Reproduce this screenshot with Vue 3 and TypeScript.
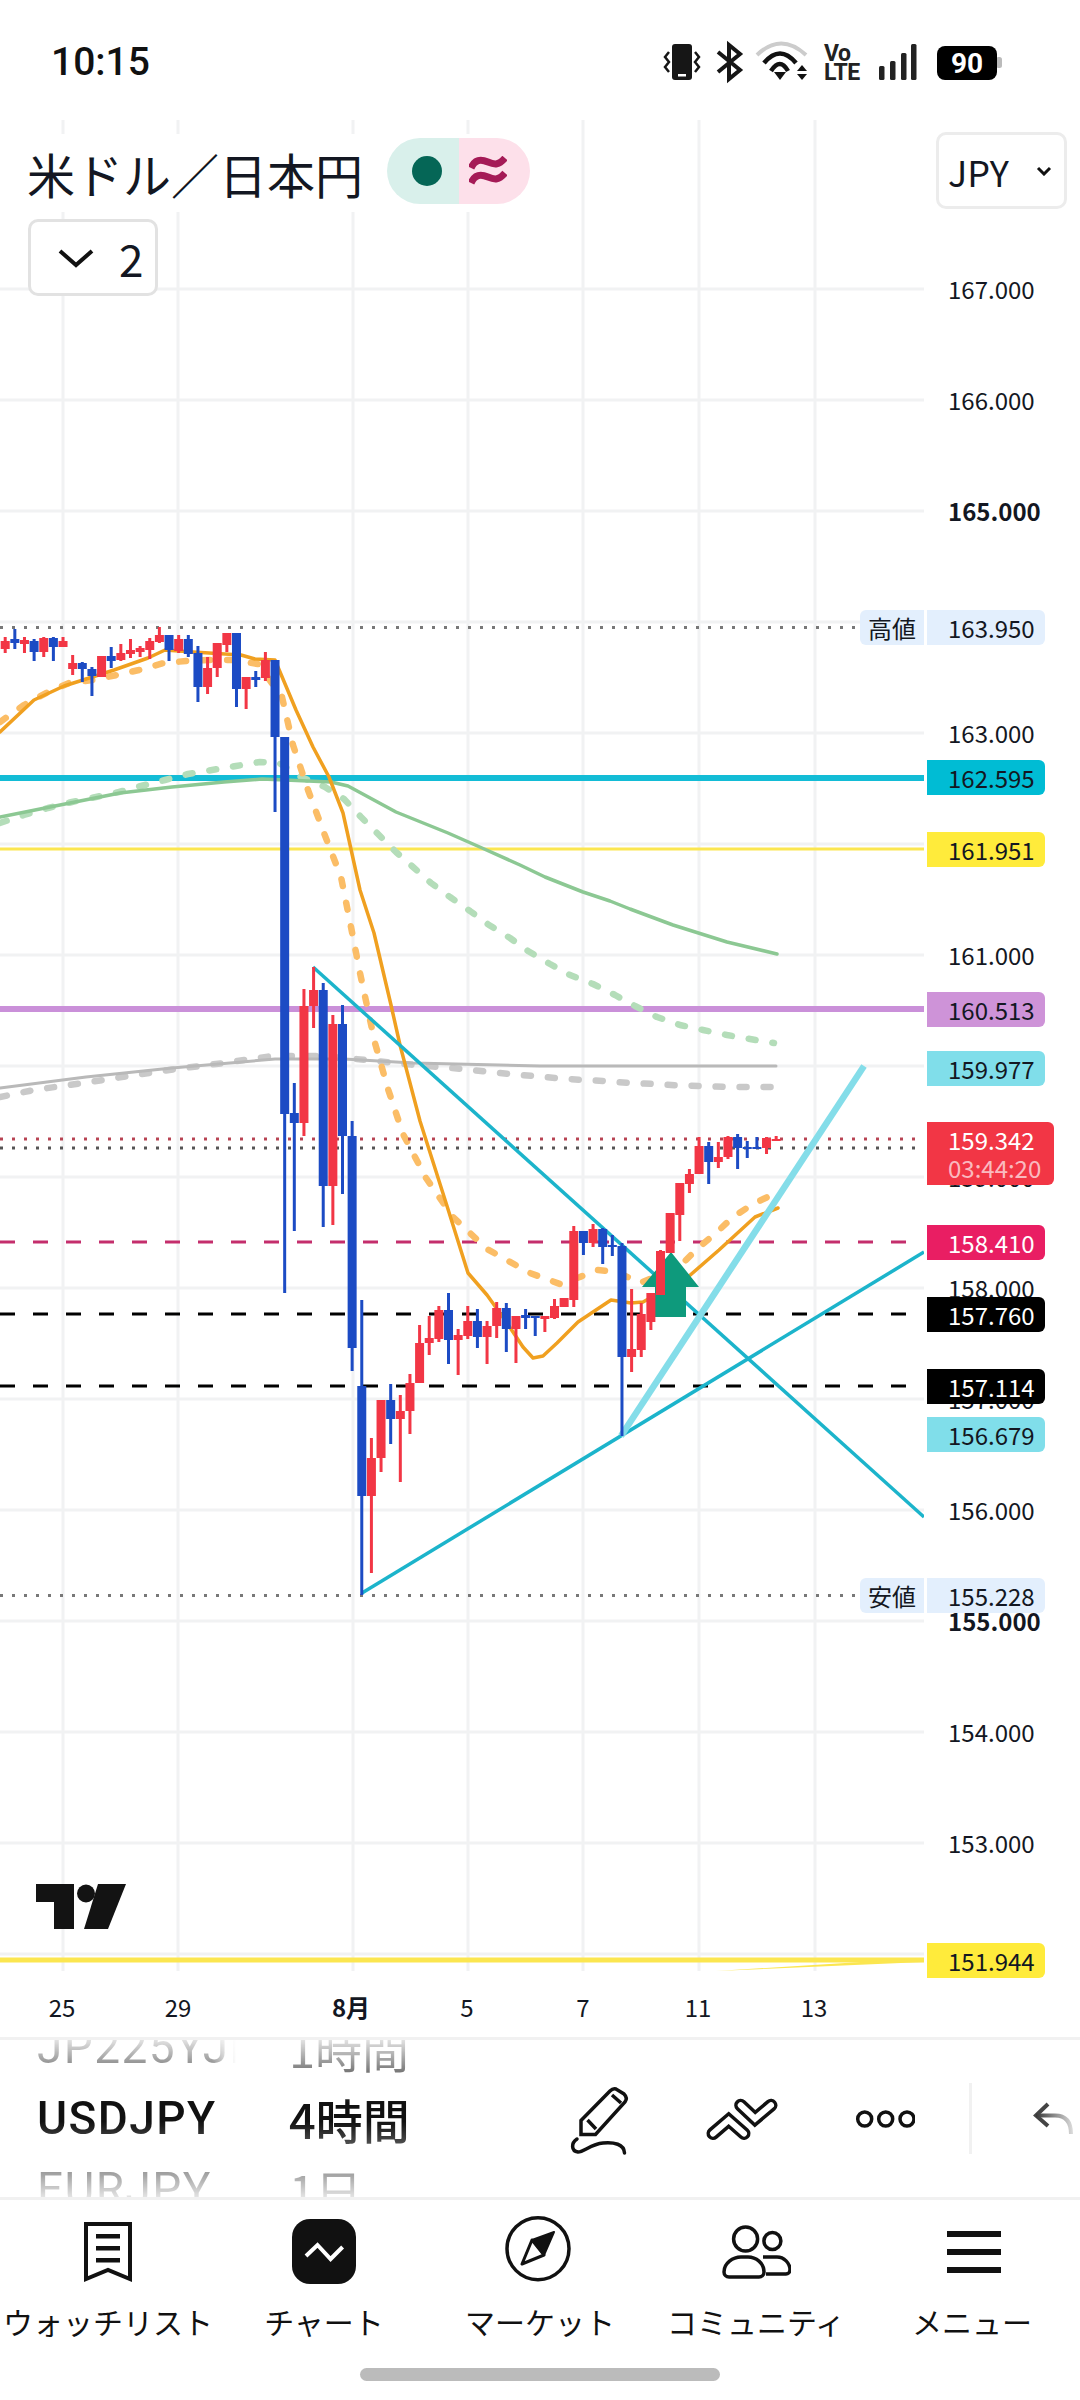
<template>
  <div class="screen">
    <header class="status">
      <span class="clock">10:15</span>
      <svg class="status-icons" width="345" height="44" viewBox="660 40 345 44">
        <rect x="672" y="44" width="20" height="36" rx="3" fill="#161616" />
        <rect x="678" y="74" width="8" height="2.5" fill="#fff" />
        <polyline points="669,52 665,57 669,62 665,67 669,72" fill="none" stroke="#161616" stroke-width="2.5" />
        <polyline points="695,52 699,57 695,62 699,67 695,72" fill="none" stroke="#161616" stroke-width="2.5" />
        <polyline points="718,52 740,70 729,79 729,45 740,54 718,72" fill="none" stroke="#161616" stroke-width="4" />
        <path d="M757 55Q781 32 806 55" fill="none" stroke="#ccc" stroke-width="4" />
        <path d="M764 63Q780 44 796 63" fill="none" stroke="#111" stroke-width="4.5" />
        <path d="M771 71Q780 57 788 71" fill="none" stroke="#111" stroke-width="4.5" />
        <polygon points="774,72 786,72 780,80" fill="#111" />
        <polygon points="797,71 807,71 802,65" fill="#111" />
        <polygon points="797,74 807,74 802,80" fill="#111" />
        <text class="volte" x="824" y="60.5">Vo</text>
        <text class="volte" x="824" y="79.5">LTE</text>
        <rect x="879" y="66" width="5.5" height="14" rx="1.5" fill="#222" />
        <rect x="890" y="61" width="5.5" height="19" rx="1.5" fill="#222" />
        <rect x="901" y="53" width="5.5" height="27" rx="1.5" fill="#222" />
        <rect x="911" y="44" width="5.5" height="36" rx="1.5" fill="#222" />
        <rect x="996" y="57" width="6" height="11" rx="2.5" fill="#bbb" />
        <rect x="937" y="46" width="60" height="34" rx="8" fill="#000" />
        <text class="battery" x="967" y="73" text-anchor="middle">90</text>
      </svg>
    </header>

    <section class="chart">
      <div class="plot-row">
        <svg class="plot" width="924" height="1851" viewBox="0 120 924 1851">
          <line v-for="y in gridY" :key="'h' + y" x1="0" x2="924" :y1="y" :y2="y" class="grid" />
          <line v-for="x in gridX" :key="'v' + x" :x1="x" :x2="x" y1="120" y2="1971" class="grid" />

          <line x1="0" x2="860" y1="627.5" y2="627.5" stroke="#787878" stroke-width="3" stroke-dasharray="3 9" />
          <line x1="0" x2="860" y1="1595.5" y2="1595.5" stroke="#787878" stroke-width="3" stroke-dasharray="3 9" />
          <line x1="0" x2="924" y1="778" y2="778" stroke="#13bcd6" stroke-width="6" />
          <line x1="0" x2="924" y1="849" y2="849" stroke="#fbe650" stroke-width="3" />
          <line x1="0" x2="924" y1="1009" y2="1009" stroke="#ca90d9" stroke-width="6" />
          <line x1="0" x2="910" y1="1242" y2="1242" stroke="#c42e6c" stroke-width="3" stroke-dasharray="15 18" />
          <line x1="0" x2="910" y1="1314" y2="1314" stroke="#000" stroke-width="3" stroke-dasharray="15 18" />
          <line x1="0" x2="910" y1="1386" y2="1386" stroke="#000" stroke-width="3" stroke-dasharray="15 18" />
          <line x1="0" x2="924" y1="1960" y2="1960" stroke="#fbe650" stroke-width="5" />
          <polygon points="716,1971 924,1958 924,1962" fill="#fbe650" />

          <polyline v-for="m in averages" :key="m.id" :points="m.points" fill="none" :stroke="m.color" :stroke-width="m.width"
            :stroke-dasharray="m.dash" stroke-linecap="round" stroke-linejoin="round" />

          <line x1="0" x2="924" y1="1139" y2="1139" stroke="#b84453" stroke-width="3" stroke-dasharray="3 9" />
          <line x1="0" x2="924" y1="1148" y2="1148" stroke="#555" stroke-width="3" stroke-dasharray="3 9" />

          <line x1="313" y1="967" x2="924" y2="1517" stroke="#1cb4cb" stroke-width="3.5" />
          <line x1="362" y1="1593" x2="924" y2="1252" stroke="#1cb4cb" stroke-width="3.5" />
          <line x1="621" y1="1436" x2="864" y2="1066" stroke="#84dde9" stroke-width="6.5" />
          <polygon points="671,1252 699,1287 686,1287 686,1317 655,1317 655,1287 642,1287" fill="#0e9a7c" />

          <g v-for="c in bars" :key="c.i" :fill="c.color">
            <rect :x="c.x - 1.5" :y="c.wt" width="3" :height="c.wb - c.wt" />
            <rect :x="c.x - 4.5" :y="c.bt" width="9" :height="Math.max(c.bb - c.bt, 2)" />
          </g>

          <path d="M36 1884H74V1929H54V1902H36Z" fill="#131313" />
          <circle cx="86" cy="1893.5" r="9" fill="#131313" />
          <path d="M98 1884H126L108 1929H84Z" fill="#131313" />
        </svg>

        <div class="axis">
          <span v-for="t in ticks" :key="t.label" class="tick" :class="{ strong: t.strong }" :style="{ top: t.top + 'px' }">{{ t.label }}</span>
          <template v-for="f in flags" :key="f.label">
            <span v-if="f.side" class="side" :style="{ top: f.top + 'px' }">{{ f.side }}</span>
            <span class="tag" :class="f.tone" :style="{ top: f.top + 'px' }">{{ f.label }}</span>
          </template>
          <div class="tag-now">
            <span>159.342</span>
            <span class="countdown">03:44:20</span>
          </div>
        </div>
      </div>

      <div class="dates">
        <span v-for="d in dates" :key="d.label" class="date" :class="{ strong: d.strong }" :style="{ left: d.x + 'px' }">{{ d.label }}</span>
      </div>

      <div class="legend">
        <span class="pair">米ドル／日本円</span>
        <span class="pill">
          <span class="pill-left"><i class="dot"></i></span>
          <span class="pill-right">
            <svg width="38" height="30" viewBox="0 0 38 30">
              <path d="M2 12C6 3 12 3 19 6S30 9 36 2" fill="none" stroke="#a51a56" stroke-width="7" />
              <path d="M2 27C6 18 12 18 19 21S30 24 36 17" fill="none" stroke="#a51a56" stroke-width="7" />
            </svg>
          </span>
        </span>
      </div>
      <div class="collapse">
        <svg width="36" height="20" viewBox="0 0 36 20"><polyline points="2,3 18,17 34,3" fill="none" stroke="#111" stroke-width="4" /></svg>
        <span>2</span>
      </div>
      <div class="currency">
        <span>JPY</span>
        <svg width="16" height="10" viewBox="0 0 16 10"><polyline points="2,2 8,8 14,2" fill="none" stroke="#111" stroke-width="3" /></svg>
      </div>
    </section>

    <section class="toolbar">
      <div class="wheel wheel-symbol">
        <div class="row cut">JP225YJPY</div>
        <div class="row active">USDJPY</div>
        <div class="row">EURJPY</div>
      </div>
      <div class="wheel wheel-range">
        <div class="row">1時間</div>
        <div class="row active">4時間</div>
        <div class="row">1日</div>
      </div>
      <div class="tool">
        <svg width="80" height="80" viewBox="558 2077 80 80" fill="none" stroke="#111" stroke-width="3.5">
          <path d="M580 2132.5V2118.5L609 2089Q612 2086 615 2087L623 2092Q627 2096 624 2100L594.5 2132.5Z" />
          <path d="M586.5 2118L595 2127M611 2093L620 2101" />
          <path d="M576 2137C570 2141 570 2149 577 2150C583 2150 590 2142 602 2141C613 2140 623 2142 623.5 2151" stroke-linecap="round" />
        </svg>
      </div>
      <div class="tool">
        <svg width="80" height="60" viewBox="701 2087 80 60" fill="none" stroke-linecap="round">
          <polyline points="712,2131.5 727.7,2118 743,2131.5" stroke="#111" stroke-width="13" />
          <polyline points="712,2131.5 727.7,2118 743,2131.5" stroke="#fff" stroke-width="6" />
          <polyline points="739.7,2103.3 754,2116.7 770,2103.3" stroke="#111" stroke-width="13" />
          <polyline points="739.7,2103.3 754,2116.7 770,2103.3" stroke="#fff" stroke-width="6" />
        </svg>
      </div>
      <div class="tool">
        <svg width="60" height="24" viewBox="854 2106 60 24" fill="none" stroke="#111" stroke-width="3.5">
          <circle cx="863.7" cy="2118" r="7" />
          <circle cx="884.7" cy="2118" r="7" />
          <circle cx="906" cy="2118" r="7" />
        </svg>
      </div>
      <div class="divider"></div>
      <svg class="undo" width="46" height="40" viewBox="1034 2098 46 40" fill="none" stroke-width="4">
        <defs>
          <linearGradient id="undoFade" gradientUnits="userSpaceOnUse" x1="1036" y1="0" x2="1074" y2="0">
            <stop offset="0" stop-color="#333" />
            <stop offset="1" stop-color="#ddd" />
          </linearGradient>
        </defs>
        <polyline points="1049,2103 1037,2114.5 1049,2125" stroke="#444" />
        <path d="M1037 2114.5H1056Q1072 2114.5 1072 2133" stroke="url(#undoFade)" />
      </svg>
    </section>

    <nav class="nav">
      <div class="nav-items">
        <div class="nav-item">
          <svg width="70" height="70" viewBox="73 2212 70 70">
            <path d="M86 2222H130V2277L108 2268L86 2277Z" fill="none" stroke="#111" stroke-width="4" />
            <rect x="96" y="2232" width="24" height="4.5" fill="#111" />
            <rect x="96" y="2244" width="24" height="4.5" fill="#111" />
            <rect x="96" y="2256" width="24" height="4.5" fill="#111" />
          </svg>
          <span>ウォッチリスト</span>
        </div>
        <div class="nav-item">
          <svg width="70" height="70" viewBox="289 2212 70 70">
            <rect x="292" y="2217" width="64" height="65" rx="18" fill="#111" />
            <polyline points="306,2254 317.5,2243 330.6,2257 342.6,2245" fill="none" stroke="#fff" stroke-width="4" />
          </svg>
          <span>チャート</span>
        </div>
        <div class="nav-item">
          <svg width="70" height="70" viewBox="505 2212 70 70">
            <circle cx="538" cy="2246.7" r="31" fill="none" stroke="#111" stroke-width="3.5" />
            <polygon points="554,2230 532,2238 544,2253" fill="#111" stroke="#111" stroke-width="2" stroke-linejoin="round" />
            <polygon points="532,2238 522,2262 544,2253" fill="none" stroke="#111" stroke-width="3" stroke-linejoin="round" />
          </svg>
          <span>マーケット</span>
        </div>
        <div class="nav-item">
          <svg width="70" height="70" viewBox="721 2212 70 70" fill="none" stroke="#111" stroke-width="3.5">
            <circle cx="745.6" cy="2237" r="12" />
            <circle cx="772.4" cy="2239" r="8.5" />
            <path d="M729 2275H759A5 5 0 0 0 764 2270C764 2261 756 2255 748 2255H741C733 2255 724 2261 724 2270A5 5 0 0 0 729 2275Z" />
            <path d="M763 2255H777C784 2255 790 2261 790 2268A4 4 0 0 1 786 2272H766" />
          </svg>
          <span>コミュニティ</span>
        </div>
        <div class="nav-item">
          <svg width="70" height="70" viewBox="937 2212 70 70">
            <rect x="947" y="2229" width="54" height="6" fill="#111" />
            <rect x="947" y="2247" width="54" height="6" fill="#111" />
            <rect x="947" y="2265" width="54" height="6" fill="#111" />
          </svg>
          <span>メニュー</span>
        </div>
      </div>
      <div class="home-bar"></div>
    </nav>
  </div>
</template>

<script setup lang="ts">
type Tone = 'pale' | 'teal' | 'yellow' | 'violet' | 'sky' | 'rose' | 'ink'

const priceY = (p: number) => 289 + (167 - p) * 111
const axisTop = (p: number, h: number) => priceY(p) - 120 - h / 2

const gridX = [63, 178, 353, 468, 583, 699, 815]
const gridY = [167, 166, 165, 164, 163, 162, 161, 160, 159, 158, 157, 156, 155, 154, 153, 152].map(priceY)

const tickRows: [string, boolean?][] = [
  ['167.000'], ['166.000'], ['165.000', true], ['163.000'], ['161.000'], ['159.000'], ['158.000'],
  ['157.000'], ['156.000'], ['155.000', true], ['154.000'], ['153.000'],
]
const ticks = tickRows.map(([label, strong]) => ({ label, strong: !!strong, top: axisTop(parseFloat(label), 30) }))

const flagRows: [string, Tone, string?][] = [
  ['163.950', 'pale', '高値'],
  ['162.595', 'teal'],
  ['161.951', 'yellow'],
  ['160.513', 'violet'],
  ['159.977', 'sky'],
  ['158.410', 'rose'],
  ['157.760', 'ink'],
  ['157.114', 'ink'],
  ['156.679', 'sky'],
  ['155.228', 'pale', '安値'],
  ['151.944', 'yellow'],
]
const flags = flagRows.map(([label, tone, side]) => ({ label, tone, side, top: axisTop(parseFloat(label), 35) }))

const dates = [
  { label: '25', x: 62 },
  { label: '29', x: 178 },
  { label: '8月', x: 351, strong: true },
  { label: '5', x: 467 },
  { label: '7', x: 583 },
  { label: '11', x: 698 },
  { label: '13', x: 814 },
]

// wick top, wick bottom, body top, body bottom, 1 = up (red)
const candles: number[][] = [
  [637, 653, 641, 649, 1], [629, 649, 639, 643, 0], [637, 653, 640, 644, 1], [639, 661, 641, 652, 0],
  [637, 657, 638, 652, 1], [637, 661, 638, 647, 0], [637, 647, 641, 647, 1], [655, 675, 663, 669, 1],
  [662, 682, 663, 669, 0], [667, 696, 669, 676, 0], [656, 677, 656, 677, 1], [647, 668, 656, 661, 0],
  [644, 661, 653, 660, 1], [639, 658, 650, 654, 1], [646, 657, 648, 652, 1], [638, 659, 641, 650, 1],
  [627, 643, 635, 642, 1], [635, 661, 635, 650, 0], [635, 653, 639, 651, 1], [635, 657, 639, 654, 0],
  [646, 702, 653, 687, 0], [657, 694, 668, 687, 1], [643, 677, 643, 668, 1], [633, 652, 633, 645, 1],
  [633, 707, 633, 689, 0], [677, 709, 677, 689, 1], [671, 687, 677, 680, 0], [652, 681, 660, 678, 1],
  [660, 812, 660, 737, 0], [737, 1293, 737, 1114, 0], [1083, 1231, 1113, 1123, 0], [989, 1136, 1006, 1123, 1],
  [967, 1028, 990, 1006, 1], [983, 1227, 990, 1186, 0], [1015, 1225, 1024, 1186, 1], [1005, 1194, 1024, 1136, 0],
  [1121, 1371, 1136, 1348, 0], [1300, 1595, 1386, 1496, 0], [1438, 1573, 1458, 1496, 1], [1400, 1472, 1400, 1458, 1],
  [1384, 1444, 1400, 1419, 0], [1395, 1482, 1411, 1419, 1], [1374, 1434, 1383, 1411, 1], [1325, 1383, 1343, 1383, 1],
  [1316, 1355, 1338, 1343, 1], [1306, 1342, 1310, 1339, 1], [1293, 1364, 1310, 1340, 0], [1329, 1375, 1335, 1340, 1],
  [1306, 1339, 1321, 1336, 1], [1309, 1348, 1321, 1337, 0], [1321, 1364, 1326, 1337, 1], [1302, 1338, 1308, 1326, 1],
  [1303, 1352, 1308, 1329, 0], [1316, 1363, 1316, 1329, 1], [1309, 1329, 1315, 1318, 0], [1316, 1336, 1316, 1318, 0],
  [1316, 1332, 1316, 1319, 1], [1299, 1319, 1306, 1318, 1], [1298, 1307, 1298, 1307, 1], [1226, 1307, 1231, 1300, 1],
  [1231, 1255, 1231, 1243, 0], [1224, 1247, 1229, 1243, 1], [1228, 1264, 1229, 1247, 0], [1235, 1256, 1245, 1247, 0],
  [1243, 1436, 1246, 1357, 0], [1289, 1372, 1349, 1357, 1], [1303, 1357, 1314, 1350, 1], [1293, 1330, 1293, 1322, 1],
  [1250, 1295, 1251, 1295, 1], [1213, 1253, 1213, 1253, 1], [1183, 1241, 1183, 1215, 1], [1169, 1193, 1174, 1184, 1],
  [1137, 1174, 1146, 1174, 1], [1142, 1184, 1146, 1162, 0], [1142, 1168, 1157, 1162, 1], [1136, 1159, 1137, 1157, 1],
  [1134, 1169, 1137, 1148, 0], [1141, 1158, 1147, 1149, 0], [1137, 1149, 1147, 1149, 0], [1137, 1154, 1138, 1148, 1],
  [1136, 1141, 1139, 1140, 1],
]
const bars = candles.map(([wt, wb, bt, bb, up], i) => ({
  i, wt, wb, bt, bb,
  x: 5.2 + i * 9.637,
  color: up ? '#f23645' : '#1c4bc4',
}))

const averages = [
  {
    id: 'gray-dash', color: '#c9c9c9', width: 6.5, dash: '7 17',
    points: '0,1097 34,1090 83,1083 129,1076 176,1069 224,1063 272,1056 320,1056 367,1060 415,1065 463,1069 510,1074 556,1078 583,1080 605,1081 630,1083 654,1084 678,1085.5 702,1086 726,1087 774,1087',
  },
  {
    id: 'gray', color: '#b9b9b9', width: 3, dash: undefined,
    points: '0,1088 86,1077 172,1068 275,1059 344,1059 413,1063 540,1066 776,1066',
  },
  {
    id: 'green-dash', color: '#b4ddb9', width: 6.5, dash: '7 17',
    points: '0,823 24,815 48,808 72,802 96,797 119,792 141,786 165,780 188,774 212,770 236,766 260,762 279,763 301,777 325,787 344,799 361,817 378,834 396,852 413,867 431,883 450,897 470,911 489,925 510,938 528,951 550,964 570,975 593,984 615,995 635,1006 657,1017 680,1025 703,1030 727,1035 750,1039 774,1043',
  },
  {
    id: 'green', color: '#8cc893', width: 3.5, dash: undefined,
    points: '0,817 45,808 120,793 172,787 224,782 262,779 331,782 348,786 396,812 448,833 482,848 520,865 545,877 583,892 610,901 630,909 673,925 727,942 777,954',
  },
  {
    id: 'orange-dash', color: '#fbbd66', width: 6.5, dash: '7 17',
    points: '0,722 24,705 48,692 69,683 93,680 117,675 139,670 164,663 186,661 210,660 234,660 258,664 282,697 293,745 308,790 324,833 341,877 351,927 360,973 375,1043 388,1089 403,1134 426,1178 453,1217 487,1249 530,1273 560,1284 580,1277 597,1270 617,1272 640,1283 660,1275 683,1263 698,1248 716,1233 733,1217 753,1204 778,1192',
  },
  {
    id: 'orange', color: '#f0a020', width: 3.5, dash: undefined,
    points: '0,732 34,700 64,686 83,680 114,670 148,658 165,650 193,652 241,655 255,659 275,660 296,710 313,747 329,777 343,813 360,890 374,933 391,1005 400,1045 420,1121 447,1206 468,1273 487,1295 507,1323 523,1347 533,1358 543,1356 557,1343 578,1322 593,1312 611,1300 631,1303 643,1302 688,1277 719,1250 755,1217 778,1208',
  },
]
</script>

<style scoped>
.screen {
  width: 1080px;
  height: 2400px;
  background: #fff;
  color: #131722;
  font-family: "Noto Sans CJK JP", "Noto Sans", sans-serif;
  overflow: hidden;
}

/* status bar */
.status {
  display: flex;
  height: 120px;
  box-sizing: border-box;
  padding: 40px 75px 0 51px;
  justify-content: space-between;
}
.clock {
  font-family: Roboto, sans-serif;
  font-weight: 500;
  font-size: 39px;
  line-height: 44px;
  color: #111;
}
.volte {
  font-family: Roboto, sans-serif;
  font-weight: 700;
  font-size: 23px;
  letter-spacing: -0.5px;
  fill: #222;
}
.battery {
  font-family: Roboto, sans-serif;
  font-weight: 700;
  font-size: 28px;
  fill: #fff;
}

/* chart */
.chart {
  position: relative;
  height: 1917px;
}
.plot-row {
  display: flex;
  height: 1851px;
}
.plot {
  display: block;
  flex: none;
}
.grid {
  stroke: #f1f2f3;
  stroke-width: 3;
}
.axis {
  position: relative;
  flex: 1;
  font-size: 24px;
}
.tick {
  position: absolute;
  left: 24px;
  line-height: 30px;
}
.tick.strong {
  font-weight: 700;
}
.tag, .side {
  position: absolute;
  height: 35px;
  line-height: 35px;
}
.tag {
  left: 3px;
  width: 118px;
  box-sizing: border-box;
  padding-left: 21px;
  border-radius: 0 6px 6px 0;
}
.side {
  left: -64px;
  width: 64px;
  text-align: center;
  background: #e3effd;
  border-radius: 6px 0 0 6px;
}
.pale { background: #e3effd; }
.teal { background: #00bcd4; }
.yellow { background: #ffeb3b; }
.violet { background: #ce93d8; }
.sky { background: #80deea; }
.rose { background: #e91e63; color: #fff; }
.ink { background: #000; color: #fff; }
.tag-now {
  position: absolute;
  left: 3px;
  top: 1002px;
  width: 127px;
  height: 63px;
  box-sizing: border-box;
  padding: 4px 0 0 21px;
  display: flex;
  flex-direction: column;
  background: #f23645;
  color: #fff;
  border-radius: 0 6px 6px 0;
  line-height: 28px;
}
.countdown {
  color: rgba(255, 255, 255, 0.68);
}
.dates {
  position: relative;
  height: 66px;
  font-size: 24px;
}
.date {
  position: absolute;
  top: 18px;
  line-height: 36px;
  transform: translateX(-50%);
}
.date.strong {
  font-weight: 700;
}

/* overlays on the chart */
.legend {
  position: absolute;
  left: 10px;
  top: 14px;
  width: 532px;
  height: 78px;
  box-sizing: border-box;
  padding-left: 17px;
  display: flex;
  align-items: center;
  background: #fff;
}
.pair {
  font-size: 48px;
  line-height: 78px;
  white-space: nowrap;
}
.pill {
  position: absolute;
  left: 377px;
  top: 4px;
  display: flex;
  height: 66px;
  border-radius: 33px;
  overflow: hidden;
}
.pill-left, .pill-right {
  display: flex;
  align-items: center;
  justify-content: center;
}
.pill-left {
  width: 72px;
  background: #d9f0eb;
}
.pill-right {
  width: 71px;
  background: #fde0ea;
}
.dot {
  width: 30px;
  height: 30px;
  margin-left: 7px;
  border-radius: 50%;
  background: #056656;
}
.pill-right svg {
  margin-right: 14px;
}
.collapse, .currency {
  position: absolute;
  display: flex;
  align-items: center;
  box-sizing: border-box;
  border: 3px solid #e2e2e2;
  border-radius: 10px;
  background: #fff;
}
.collapse {
  left: 28px;
  top: 99px;
  width: 130px;
  height: 77px;
  padding-left: 27px;
  gap: 25px;
  font-size: 44px;
}
.currency {
  left: 936px;
  top: 12px;
  width: 131px;
  height: 77px;
  padding-left: 9px;
  gap: 27px;
  font-size: 36px;
  border-color: #ececec;
}

/* symbol wheel and tools */
.toolbar {
  display: flex;
  align-items: center;
  height: 157px;
  border-top: 3px solid #f1f1f1;
  border-bottom: 3px solid #f1f1f1;
}
.wheel {
  flex: none;
  height: 157px;
  display: flex;
  flex-direction: column;
  justify-content: center;
  font-size: 46px;
  overflow: hidden;
  -webkit-mask-image: linear-gradient(to bottom, rgba(0, 0, 0, 0.12), #000 40%, #000 52%, rgba(0, 0, 0, 0.12));
  mask-image: linear-gradient(to bottom, rgba(0, 0, 0, 0.12), #000 40%, #000 52%, rgba(0, 0, 0, 0.12));
}
.wheel-symbol {
  width: 199px;
  margin-left: 37px;
  margin-right: 1px;
  font-family: Roboto, sans-serif;
  letter-spacing: 1.4px;
}
.wheel-range {
  width: 290px;
  margin-left: 52px;
  margin-right: -52px;
  font-size: 47px;
}
.row {
  flex: none;
  height: 71px;
  line-height: 71px;
  white-space: nowrap;
  color: #111;
}
.row.active {
  font-weight: 500;
}
.row.cut {
  -webkit-mask-image: linear-gradient(to right, #000 88%, transparent);
  mask-image: linear-gradient(to right, #000 88%, transparent);
}
.tool {
  flex: none;
  width: 143px;
  display: flex;
  justify-content: center;
}
.divider {
  flex: none;
  width: 3px;
  height: 71px;
  margin-left: 13px;
  background: #f1f1f1;
}
.undo {
  flex: none;
  margin-left: 61px;
}

/* bottom navigation */
.nav {
  display: flex;
  flex-direction: column;
}
.nav-items {
  display: grid;
  grid-template-columns: repeat(5, 1fr);
  padding-top: 14px;
}
.nav-item {
  display: flex;
  flex-direction: column;
  align-items: center;
  font-size: 30px;
  color: #111;
}
.nav-item span {
  margin-top: 17px;
  line-height: 40px;
  white-space: nowrap;
}
.home-bar {
  width: 360px;
  height: 13px;
  margin: 27px auto 0;
  border-radius: 7px;
  background: #bbb;
}
</style>
